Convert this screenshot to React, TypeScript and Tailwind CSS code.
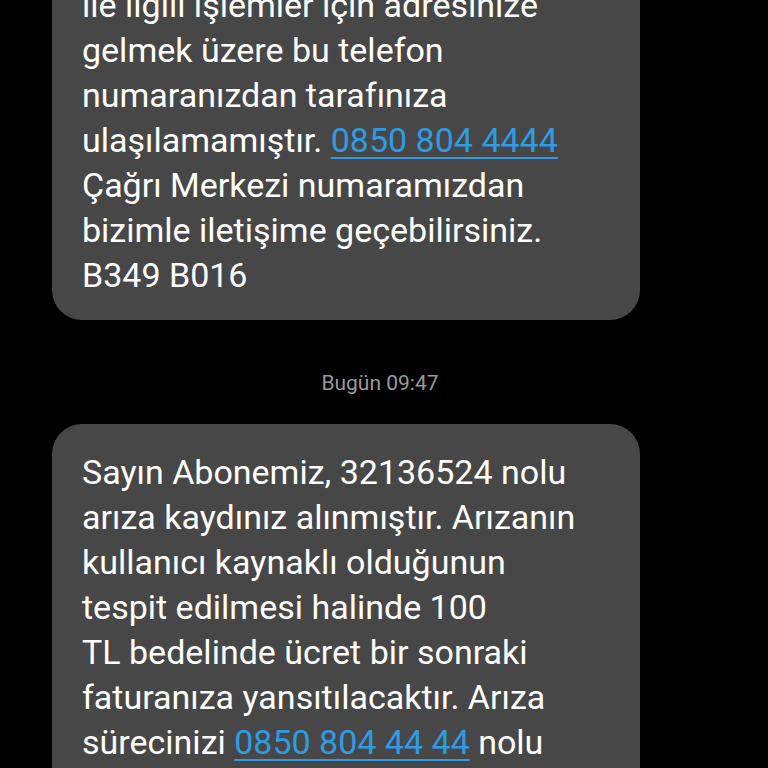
const Link = ({ children }: { children: React.ReactNode }) => (
  <span className="text-[#2f9be3] underline decoration-[2px] underline-offset-[5px]">{children}</span>
);

const Bubble = ({ lines, className = "" }: { lines: React.ReactNode[]; className?: string }) => (
  <div className={`w-[588px] bg-[#474747] rounded-[30px] pl-[30px] pr-4 text-[34px] leading-[45px] text-white ${className}`}>
    {lines.map((l, i) => (
      <div key={i} className="whitespace-nowrap">{l}</div>
    ))}
  </div>
);

export default function App() {
  return (
    <div className="w-[768px] h-[768px] overflow-hidden bg-black" style={{ fontFamily: "Roboto, 'Noto Sans', sans-serif" }}>
      <div className="flex flex-col pl-[52px]">
        <Bubble
          className="mt-[-88px] pt-[26px] pb-[22px] rounded-t-none"
          lines={[
            "Sayın Abonemiz, hizmetiniz",
            "ile ilgili işlemler için adresinize",
            "gelmek üzere bu telefon",
            "numaranızdan tarafınıza",
            <>ulaşılamamıştır. <Link>0850 804 4444</Link></>,
            "Çağrı Merkezi numaramızdan",
            "bizimle iletişime geçebilirsiniz.",
            "B349 B016",
          ]}
        />
        <div className="h-[104px] pt-[50px] flex justify-center w-[656px] text-[21px] leading-[26px] text-[#9a9a9a]">
          Bugün 09:47
        </div>
        <Bubble
          className="pt-[26px] pb-[26px]"
          lines={[
            "Sayın Abonemiz, 32136524 nolu",
            "arıza kaydınız alınmıştır. Arızanın",
            "kullanıcı kaynaklı olduğunun",
            "tespit edilmesi halinde 100",
            "TL bedelinde ücret bir sonraki",
            "faturanıza yansıtılacaktır. Arıza",
            <>sürecinizi <Link>0850 804 44 44</Link> nolu</>,
            "Çağrı Merkezi numaramızdan",
            "takip edebilirsiniz.",
          ]}
        />
      </div>
    </div>
  );
}
